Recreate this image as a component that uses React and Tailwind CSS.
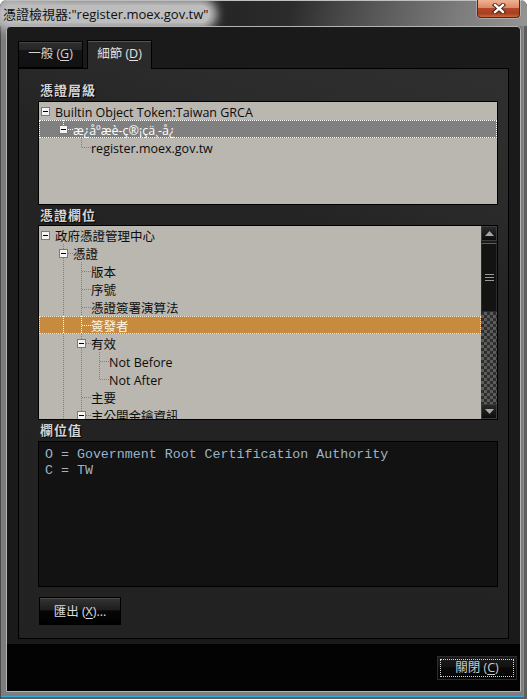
import React from "react";

const SANS = "font-['Open_Sans','Noto_Sans_CJK_TC',sans-serif]";

// Certificate hierarchy rows
const hierarchy = [
  { level: 0, conn: "none", box: true, guides: [], text: "Builtin Object Token:Taiwan GRCA" },
  { level: 1, conn: "end", box: true, guides: [false], text: "æ¿åºæè-ç®¡çä¸-å¿", sel: "gray" },
  { level: 2, conn: "end", box: false, guides: [false, false], text: "register.moex.gov.tw" },
];

// Certificate field rows
const fields = [
  { conn: "none", box: true, guides: [], text: "政府憑證管理中心" },
  { conn: "tee", box: true, guides: [false], text: "憑證" },
  { conn: "tee", box: false, guides: [false, true], text: "版本" },
  { conn: "tee", box: false, guides: [false, true], text: "序號" },
  { conn: "tee", box: false, guides: [false, true], text: "憑證簽署演算法" },
  { conn: "tee", box: false, guides: [false, true], text: "簽發者", sel: "orange" },
  { conn: "tee", box: true, guides: [false, true], text: "有效" },
  { conn: "tee", box: false, guides: [false, true, true], text: "Not Before" },
  { conn: "end", box: false, guides: [false, true, true], text: "Not After" },
  { conn: "tee", box: false, guides: [false, true], text: "主要" },
  { conn: "tee", box: true, guides: [false, true], text: "主公開金鑰資訊" },
];

function GuideCell({ on, light }) {
  const c = light ? "#ffffff" : "#808080";
  return (
    <svg width="18" height="18" className="block flex-none" shapeRendering="crispEdges">
      {on && <line x1="5.5" y1="0" x2="5.5" y2="18" stroke={c} strokeDasharray="1 1" />}
    </svg>
  );
}

function OwnCell({ conn, box, light }) {
  const c = light ? "#ffffff" : "#808080";
  return (
    <svg width="15" height="18" className="block flex-none" shapeRendering="crispEdges">
      {conn === "tee" && <line x1="5.5" y1="0" x2="5.5" y2="18" stroke={c} strokeDasharray="1 1" />}
      {conn === "end" && <line x1="5.5" y1="0" x2="5.5" y2="9" stroke={c} strokeDasharray="1 1" />}
      {conn !== "none" && <line x1="6" y1="9.5" x2="15" y2="9.5" stroke={c} strokeDasharray="1 1" />}
      {box && (
        <>
          <rect x="1.5" y="5.5" width="8" height="8" fill="#f4f4f4" stroke="#7a7a7a" />
          <line x1="3" y1="9.5" x2="8" y2="9.5" stroke="#000000" />
        </>
      )}
    </svg>
  );
}

function TreeRow({ row }) {
  let cls = "text-[#0c0c0c]";
  if (row.sel === "gray") cls = "bg-[#808080] text-white outline-1 outline-dotted outline-white -outline-offset-1";
  if (row.sel === "orange") cls = "bg-[#c68b3f] text-[#fff6e6] outline-1 outline-dotted outline-[#f7e7cc] -outline-offset-1";
  return (
    <div className={`flex h-[18px] flex-none items-start pl-px ${cls}`}>
      {row.guides.map((g, i) => (
        <GuideCell key={i} on={g} light={!!row.sel} />
      ))}
      <OwnCell conn={row.conn} box={row.box} light={!!row.sel} />
      <span className="whitespace-nowrap h-[18px] pt-[4px] leading-[14px]">{row.text}</span>
    </div>
  );
}

function SectionLabel({ children }) {
  return (
    <div className="ml-[2px] h-[16px] leading-[16px] text-[13px] font-bold tracking-[1px] text-[#d4d4d4] [text-shadow:1px_1px_1px_#000]">
      {children}
    </div>
  );
}

function ScrollButton({ up }) {
  return (
    <div className="h-[15px] flex-none border border-[#3c3c3c] bg-[linear-gradient(to_bottom,#2a2a2a,#0c0c0c)] flex items-center justify-center">
      <svg width="9" height="5" className="block">
        {up ? <path d="M0 5 L4.5 0 L9 5Z" fill="#a6a6a6" /> : <path d="M0 0 L4.5 5 L9 0Z" fill="#a6a6a6" />}
      </svg>
    </div>
  );
}

function ScrollBar() {
  return (
    <div className="w-[16px] flex-none bg-[#1c1c1c] flex flex-col">
      <ScrollButton up />
      <div className="h-[2px] flex-none" />
      <div className="h-[69px] flex-none border border-[#2c2c2c] border-t-[#5a5a5a] bg-[#131313] flex flex-col items-center justify-center gap-[2px]">
        <div className="w-[9px] h-px bg-[#9a9a9a]" />
        <div className="w-[9px] h-px bg-[#9a9a9a]" />
        <div className="w-[9px] h-px bg-[#9a9a9a]" />
      </div>
      <div className="flex-1 bg-[conic-gradient(#5c5c5c_25%,#2e2e2e_0_50%,#5c5c5c_0_75%,#2e2e2e_0)] bg-[length:6px_6px]" />
      <ScrollButton />
    </div>
  );
}

export default function App() {
  return (
    <div
      className={`w-[527px] h-[699px] bg-[#7d7d7d] rounded-t-[7px] overflow-hidden flex flex-col ${SANS} shadow-[inset_1px_0_0_#4a4a4a,inset_-3px_-2px_0_#5e5e5e,inset_-4px_-3px_0_#35a8d8]`}
    >
      {/* title bar */}
      <div className="h-[26px] flex-none flex items-start justify-between bg-[linear-gradient(105deg,#8c8c8c_0%,#3c3c3c_14%,#262626_45%,#2c2c2c_55%,#464646_64%,#5f5f5f_74%,#7b7b7b_86%,#949494_100%)] shadow-[inset_0_1px_0_#c0c0c0]">
        <div className="mt-[5px] ml-[1px] h-[18px] px-[2px] rounded-[9px] bg-[#bdbdbd] shadow-[0_0_10px_7px_#bdbdbd] text-[13px] leading-[18px] text-[#101010] whitespace-nowrap">
          憑證檢視器:"register.moex.gov.tw"
        </div>
        <div className="mr-[7px] w-[43px] h-[18px] rounded-b-[4px] border border-t-0 border-[#5a2614] bg-[linear-gradient(to_bottom,#efb294_0%,#dc8a64_45%,#b2482a_50%,#a8401f_80%,#c8683e_100%)] flex items-center justify-center shadow-[0_0_0_1px_rgba(255,255,255,0.3)]">
          <svg width="14" height="11" className="block">
            <path d="M3 2 L11 9 M11 2 L3 9" stroke="#3a160a" strokeWidth="4.2" strokeLinecap="square" />
            <path d="M3 2 L11 9 M11 2 L3 9" stroke="#ffffff" strokeWidth="2.4" strokeLinecap="square" />
          </svg>
        </div>
      </div>

      {/* client area */}
      <div className="mx-[6px] h-[666px] flex-none border border-[#b4b4b4] rounded-t-[4px] bg-[#1a1a1a] flex flex-col">
        <div className="px-[11px] pt-[13px] flex flex-col">
          {/* tabs */}
          <div className="h-[28px] flex items-end gap-[4px]">
            <div className="w-[65px] h-[27px] border border-black bg-[linear-gradient(to_bottom,#2e2e2e_0%,#262626_32%,#141414_33%,#111111_100%)] shadow-[inset_0_1px_0_#454545] flex items-center justify-center text-[12.5px] text-[#d4d4d4]">
              一般 (<span className="underline underline-offset-2">G</span>)
            </div>
            <div className="relative z-10 -mb-px w-[65px] h-[29px] border border-b-0 border-black bg-[#2a2a2a] shadow-[inset_0_1px_0_#555555] flex items-center justify-center pb-px text-[12.5px] text-[#e2e2e2]">
              細節 (<span className="underline underline-offset-2">D</span>)
            </div>
          </div>

          {/* details panel */}
          <div className="h-[571px] border border-black bg-[linear-gradient(200deg,#2f2f2f_0%,#2b2b2b_18%,#242424_30%,#222222_100%)] flex flex-col pt-[13px] pl-[19px]">
            <SectionLabel>憑證層級</SectionLabel>
            <div className="mt-[3px] w-[460px] h-[104px] flex-none border border-black bg-[#bab7b0] overflow-hidden flex flex-col text-[12.5px]">
              {hierarchy.map((r, i) => (
                <TreeRow key={i} row={r} />
              ))}
            </div>

            <div className="mt-[2px]">
              <SectionLabel>憑證欄位</SectionLabel>
            </div>
            <div className="mt-[2px] w-[460px] h-[195px] flex-none border border-black bg-[#bab7b0] flex">
              <div className="flex-1 overflow-hidden flex flex-col text-[12.5px]">
                {fields.map((r, i) => (
                  <TreeRow key={i} row={r} />
                ))}
              </div>
              <ScrollBar />
            </div>

            <div className="mt-[2px]">
              <SectionLabel>欄位值</SectionLabel>
            </div>
            <div className="mt-[3px] w-[460px] h-[146px] flex-none border border-black bg-[#121212] pl-[6px] pt-[5px] font-['Liberation_Mono',monospace] text-[13.3px] leading-[16px] text-[#9fb2c6] whitespace-pre">
              <div>O = Government Root Certification Authority</div>
              <div>C = TW</div>
            </div>

            <div className="mt-[10px] ml-[1px] w-[82px] h-[28px] flex-none border border-black bg-[linear-gradient(to_bottom,#343434_0%,#1e1e1e_45%,#060606_50%,#000000_100%)] shadow-[inset_0_1px_0_#4a4a4a] flex items-center justify-center pt-[2px] text-[12.5px] text-[#dadada]">
              匯出 (<span className="underline underline-offset-2">X</span>)...
            </div>
          </div>
        </div>

        {/* bottom button strip */}
        <div className="mt-[5px] flex-1 bg-[#030303] flex justify-end items-start pt-[12px] pr-[3px]">
          <div className="w-[80px] h-[24px] border border-[#2c2c2c] bg-[linear-gradient(to_bottom,#1c1c1c_0%,#121212_45%,#080808_50%,#050505_100%)] p-[2px] flex">
            <div className="flex-1 border border-dotted border-[#d8d8d8] flex items-center justify-center pt-px text-[12.5px] text-[#cccccc]">
              關閉 (<span className="underline underline-offset-2">C</span>)
            </div>
          </div>
        </div>
      </div>
    </div>
  );
}
